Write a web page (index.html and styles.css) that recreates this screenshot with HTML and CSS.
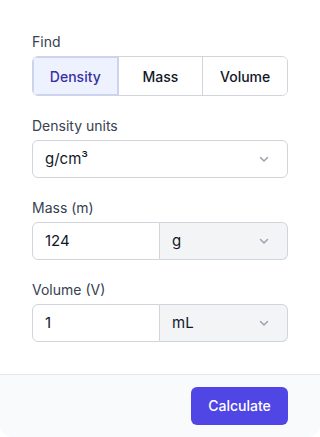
FILE: index.html
```html
<!DOCTYPE html>
<html>
<head>
   <title>Density Calculator</title>
   <link rel="stylesheet" href="styles.css">
</head>
<body>
   <div class="card">
       <div class="card-body">
           <div class="field">
               <span class="field-label">Find</span>
               <div class="segmented">
                   <button class="segment active">Density</button>
                   <button class="segment">Mass</button>
                   <button class="segment">Volume</button>
               </div>
           </div>

           <div class="field">
               <span class="field-label">Density units</span>
               <div class="select">
                   <span>g/cm³</span>
                   <svg class="chevron" width="16" height="16" viewBox="0 0 16 16"><polyline points="4.5,6.5 8,10 11.5,6.5" fill="none" stroke="#9ca3af" stroke-width="1.5" stroke-linecap="round" stroke-linejoin="round"/></svg>
               </div>
           </div>

           <div class="field">
               <span class="field-label">Mass (m)</span>
               <div class="input-group">
                   <div class="input">124</div>
                   <div class="select unit">
                       <span>g</span>
                       <svg class="chevron" width="16" height="16" viewBox="0 0 16 16"><polyline points="4.5,6.5 8,10 11.5,6.5" fill="none" stroke="#9ca3af" stroke-width="1.5" stroke-linecap="round" stroke-linejoin="round"/></svg>
                   </div>
               </div>
           </div>

           <div class="field">
               <span class="field-label">Volume (V)</span>
               <div class="input-group">
                   <div class="input">1</div>
                   <div class="select unit">
                       <span>mL</span>
                       <svg class="chevron" width="16" height="16" viewBox="0 0 16 16"><polyline points="4.5,6.5 8,10 11.5,6.5" fill="none" stroke="#9ca3af" stroke-width="1.5" stroke-linecap="round" stroke-linejoin="round"/></svg>
                   </div>
               </div>
           </div>
       </div>

       <div class="card-footer">
           <button class="primary-btn">Calculate</button>
       </div>
   </div>
</body>
</html>
```

FILE: styles.css
```css
* {
    margin: 0;
    padding: 0;
    box-sizing: border-box;
}

body {
    font-family: Inter, 'Noto Sans', sans-serif;
    background: #FFFFFF;
    color: #111827;
    font-size: 14px;
    line-height: 20px;
}

.card {
    width: 320px;
    height: 437px;
    border-radius: 12px;
    overflow: hidden;
    display: flex;
    flex-direction: column;
    background: #FFFFFF;
}

.card-body {
    flex: 1;
    padding: 32px 32px 0;
    display: flex;
    flex-direction: column;
    gap: 20px;
}

.field {
    display: flex;
    flex-direction: column;
    gap: 4px;
}

.field-label {
    color: #374151;
    font-size: 14px;
}

.segmented {
    display: grid;
    grid-template-columns: 1fr 1fr 1fr;
    border: 1px solid #d1d5db;
    border-radius: 6px;
    overflow: hidden;
    height: 40px;
}

.segment {
    font-family: Inter, 'Noto Sans', sans-serif;
    font-size: 14px;
    font-weight: 500;
    color: #111827;
    background: #FFFFFF;
    border: none;
    border-left: 1px solid #d1d5db;
}

.segment:first-child {
    border-left: none;
}

.segment.active {
    background: #eef2ff;
    color: #3730a3;
    box-shadow: inset 0 0 0 1px #c7d2fe;
}

.select,
.input {
    height: 38px;
    border: 1px solid #d1d5db;
    border-radius: 6px;
    padding: 0 12px;
    display: flex;
    align-items: center;
    font-size: 15px;
    color: #111827;
    background: #FFFFFF;
}

.select {
    justify-content: space-between;
    padding-right: 15px;
}

.input-group {
    display: grid;
    grid-template-columns: 1fr 1fr;
}

.input-group .input {
    border-radius: 6px 0 0 6px;
}

.input-group .unit {
    border-left: none;
    border-radius: 0 6px 6px 0;
    background: #f3f4f6;
}

.card-footer {
    margin-top: 32px;
    height: 63px;
    border-top: 1px solid #e5e7eb;
    background: #f9fafb;
    display: flex;
    justify-content: flex-end;
    align-items: center;
    padding: 0 32px 0 0;
}

.primary-btn {
    font-family: Inter, 'Noto Sans', sans-serif;
    font-size: 14px;
    font-weight: 500;
    line-height: 20px;
    color: #FFFFFF;
    background: #4f46e5;
    border: none;
    border-radius: 6px;
    padding: 9px 17px;
    width: 97px;
}
```
